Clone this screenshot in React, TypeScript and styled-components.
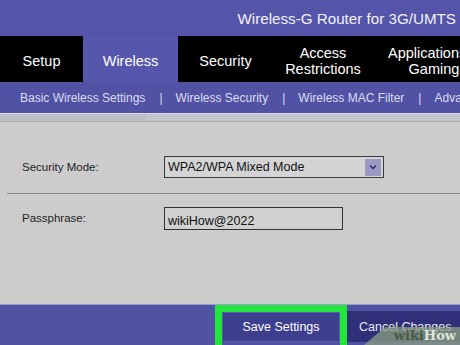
import React from "react";
import styled, { createGlobalStyle } from "styled-components";

const TABS = [
  { label: "Setup", width: 83 },
  { label: "Wireless", width: 95, active: true },
  { label: "Security", width: 95 },
  { label: "Access\nRestrictions", width: 100 },
  { label: "Applications &\nGaming", width: 122 },
];

const SUBNAV = [
  "Basic Wireless Settings",
  "Wireless Security",
  "Wireless MAC Filter",
  "Advanced Wireless Settings",
];

const GlobalStyle = createGlobalStyle`
  html, body {
    margin: 0;
    padding: 0;
    background: #cccccc;
  }
  body {
    font-family: "Liberation Sans", Arial, sans-serif;
  }
`;

export default function App() {
  return (
    <Page>
      <GlobalStyle />
      <Header>
        <Title>Wireless-G Router for 3G/UMTS</Title>
      </Header>
      <TabBar>
        {TABS.map((tab) => (
          <Tab key={tab.label} $width={tab.width} $active={!!tab.active}>
            {tab.label}
          </Tab>
        ))}
      </TabBar>
      <SubNav>
        {SUBNAV.map((item, idx) => (
          <React.Fragment key={item}>
            {idx > 0 && <Divider>|</Divider>}
            <SubItem>{item}</SubItem>
          </React.Fragment>
        ))}
      </SubNav>
      <Shelf>
        <ShelfTab />
      </Shelf>
      <Content>
        <FormRow $height={52}>
          <Label>Security Mode:</Label>
          <Select>
            <span>WPA2/WPA Mixed Mode</span>
            <Arrow>
              <svg width="10" height="8" viewBox="0 0 10 8">
                <path d="M2 2.5 L5 5.5 L8 2.5" fill="none" stroke="#2a2a6a" strokeWidth="1.3" />
              </svg>
            </Arrow>
          </Select>
        </FormRow>
        <Rule />
        <FormRow $height={48}>
          <Label>Passphrase:</Label>
          <TextInput>wikiHow@2022</TextInput>
        </FormRow>
      </Content>
      <Footer>
        <Highlight>
          <SaveButton>Save Settings</SaveButton>
        </Highlight>
        <CancelButton>Cancel Changes</CancelButton>
        <Watermark>
          wiki<b>How</b>
        </Watermark>
      </Footer>
    </Page>
  );
}

const Page = styled.div`
  width: 460px;
  height: 345px;
  overflow: hidden;
  display: flex;
  flex-direction: column;
  background: #cccccc;
`;

const Header = styled.div`
  height: 36px;
  background: #5454a8;
  display: flex;
  align-items: center;
  justify-content: flex-end;
  padding-right: 4px;
`;

const Title = styled.div`
  color: #f2f2fa;
  font-size: 15.2px;
  white-space: nowrap;
`;

const TabBar = styled.div`
  height: 46px;
  display: flex;
  background: #000;
  overflow: hidden;
`;

const Tab = styled.div<{ $width: number; $active: boolean }>`
  flex: 0 0 ${(p) => p.$width}px;
  display: flex;
  align-items: center;
  justify-content: center;
  text-align: center;
  white-space: pre-line;
  font-size: 14.5px;
  line-height: 16px;
  padding-top: 4px;
  box-sizing: border-box;
  color: #ffffff;
  background: ${(p) => (p.$active ? "#5656ac" : "#000")};
`;

const SubNav = styled.div`
  height: 31px;
  background: #5152a4;
  display: flex;
  align-items: center;
  padding-left: 20px;
  white-space: nowrap;
  overflow: hidden;
  color: #dcdcf2;
  font-size: 12px;
`;

const SubItem = styled.span``;

const Divider = styled.span`
  margin: 0 13px 0 14px;
`;

const Shelf = styled.div`
  height: 7px;
  background: #c4c4cc;
  border-top: 1px solid #d8d8e6;
  border-bottom: 1px solid #aaaaaa;
`;

const ShelfTab = styled.div`
  width: 145px;
  height: 100%;
  background: #bdbdc4;
`;

const Content = styled.div`
  flex: 1;
  background: #cccccc;
  display: flex;
  flex-direction: column;
  padding-top: 19px;
`;

const FormRow = styled.div<{ $height: number }>`
  height: ${(p) => p.$height}px;
  display: flex;
  align-items: center;
  padding-left: 22px;
`;

const Label = styled.div`
  width: 142px;
  font-size: 11.5px;
  color: #1e1e1e;
`;

const Select = styled.div`
  width: 215px;
  height: 20px;
  border: 1px solid #3a3a3a;
  background: #d4d4d4;
  display: flex;
  align-items: center;
  justify-content: space-between;
  padding-left: 3px;
  font-size: 12.5px;
  color: #111;
`;

const Arrow = styled.div`
  width: 16px;
  height: 17px;
  margin-right: 2px;
  background: #9a9ac4;
  display: flex;
  align-items: center;
  justify-content: center;
`;

const Rule = styled.div`
  height: 1px;
  margin-left: 7px;
  background: #8a8a8a;
`;

const TextInput = styled.div`
  width: 174px;
  height: 20px;
  border: 1px solid #333;
  background: #d0d0d0;
  display: flex;
  align-items: flex-end;
  padding-left: 3px;
  padding-bottom: 1px;
  font-size: 12.5px;
  color: #111;
`;

const Footer = styled.div`
  height: 40px;
  background: #5052a3;
  border-top: 1px solid #9a9ad0;
  display: flex;
  align-items: stretch;
  padding-left: 215px;
  position: relative;
`;

const Highlight = styled.div`
  width: 118px;
  border: 7px solid #22e63c;
  border-bottom: none;
  display: flex;
`;

const SaveButton = styled.div`
  flex: 1;
  margin-bottom: 3px;
  background: #3d3e8e;
  border: 1px solid #5a5ab0;
  color: #ffffff;
  font-size: 12.5px;
  display: flex;
  align-items: center;
  justify-content: center;
`;

const CancelButton = styled.div`
  flex: 1;
  margin: 6px 0 3px 0;
  background: #2f3078;
  color: #e8e8f6;
  font-size: 12.5px;
  display: flex;
  align-items: center;
  padding-left: 12px;
  white-space: nowrap;
`;

const Watermark = styled.div`
  position: absolute;
  right: 0;
  bottom: 0;
  width: 96px;
  height: 18px;
  background: rgba(140, 160, 130, 0.75);
  clip-path: polygon(22% 0, 100% 0, 100% 100%, 0 100%);
  font-family: "DejaVu Serif", "Liberation Serif", serif;
  font-weight: bold;
  font-size: 13px;
  line-height: 18px;
  color: #4a5a44;
  display: flex;
  align-items: flex-end;
  justify-content: flex-end;
  padding-right: 4px;
  box-sizing: border-box;

  b {
    color: #dfe6da;
  }
`;
